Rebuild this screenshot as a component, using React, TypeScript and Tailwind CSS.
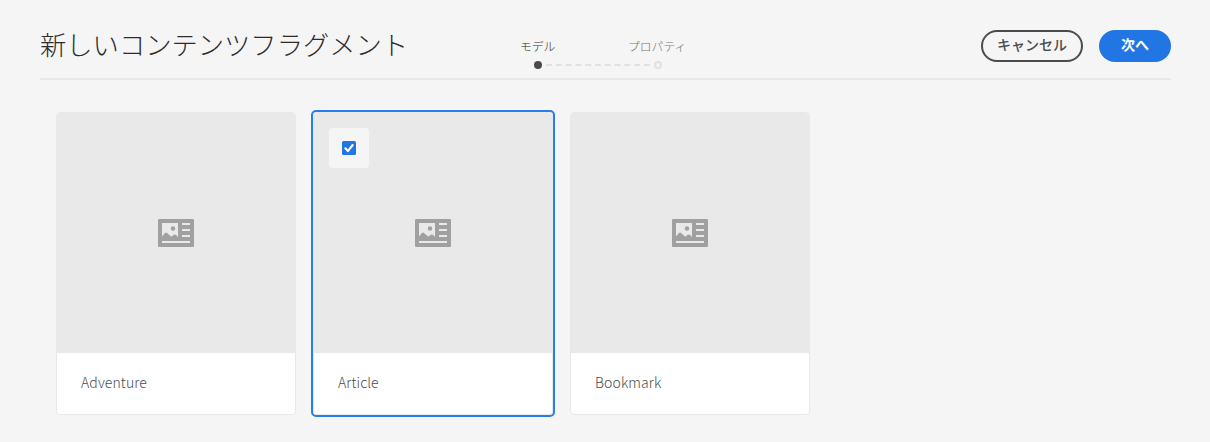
type Model = { name: string; selected?: boolean };

const models: Model[] = [
  { name: 'Adventure' },
  { name: 'Article', selected: true },
  { name: 'Bookmark' },
];

function FragmentIcon() {
  return (
    <svg width="36" height="28" viewBox="0 0 36 28" aria-hidden="true">
      <rect width="36" height="28" rx="1" fill="#a0a0a0" />
      <path
        d="M4 4H20V18L18.4 16.2Q16.7 14.6 15 16.2L13.4 17.8L9 13.9Q8 13 7 13.9L4 17.5Z"
        fill="#e9e9e9"
      />
      <circle cx="15" cy="9.5" r="2.2" fill="#a0a0a0" />
      <path d="M24 5H32M24 11H32M24 17H32M4 23H32" stroke="#e9e9e9" strokeWidth="2" />
    </svg>
  );
}

function SelectedMark() {
  return (
    <span className="absolute top-[15px] left-[15px] flex size-10 items-center justify-center rounded-[4px] bg-[#f5f5f5]">
      <svg width="14" height="14" viewBox="0 0 14 14" aria-hidden="true">
        <rect width="14" height="14" rx="1.5" fill="#2176e3" />
        <path d="M3.4 7.3L5.9 10.1L10.7 4" fill="none" stroke="#fff" strokeWidth="2.1" strokeLinecap="round" strokeLinejoin="round" />
      </svg>
    </span>
  );
}

function ModelCard({ name, selected }: Model) {
  return (
    <article
      className={
        selected
          ? 'relative h-[303px] w-60 rounded-[3px] border border-[#e8e8e8] bg-white outline-2 outline-[#2680eb]'
          : 'relative h-[303px] w-60 rounded-[4px] border border-[#e8e8e8] bg-white'
      }
    >
      <div className="flex h-60 items-center justify-center rounded-t-[3px] bg-[#e9e9e9]">
        <FragmentIcon />
      </div>
      {selected && <SelectedMark />}
      <p className="flex h-[58px] items-center pl-6 text-[14px] leading-5 font-light tracking-[0.1px] text-[#4b4b4b]">
        {name}
      </p>
    </article>
  );
}

export default function App() {
  return (
    <main className="h-[442px] w-[1210px] overflow-hidden bg-[#f5f5f5] px-10 font-['Noto_Sans_CJK_JP',sans-serif]">
      <header className="flex h-20 w-[1131px] items-start border-b-2 border-[#e8e8e8]">
        <h1 className="mt-[24px] w-[480px] text-[26.3px] leading-10 font-light whitespace-nowrap text-[#2c2c2c]">
          新しいコンテンツフラグメント
        </h1>
        <div className="mt-[37px] w-[170px]">
          <div className="flex text-[11.8px] leading-[18px] font-light whitespace-nowrap">
            <span className="w-[108px] text-[#2c2c2c]">モデル</span>
            <span className="text-[#747474]">プロパティ</span>
          </div>
          <div className="mt-[6px] ml-[14px] flex items-center gap-1">
            <span className="size-2 rounded-full bg-[#4b4b4b]" />
            <span className="w-[104px] border-t-2 border-dashed border-[#e1e1e1]" />
            <span className="size-2 rounded-full border-2 border-[#e1e1e1]" />
          </div>
        </div>
        <div className="mt-[30px] ml-auto flex gap-4 text-[14px] font-bold">
          <button className="h-8 w-[102px] rounded-full border-2 border-[#4b4b4b] pb-[3px] leading-[25px] font-medium text-[#4b4b4b]">キャンセル</button>
          <button className="h-8 w-[72px] rounded-full bg-[#2176e3] pb-[3px] leading-[29px] text-white">次へ</button>
        </div>
      </header>
      <section className="flex gap-[17px] pt-8 pl-4">
        {models.map((model) => (
          <ModelCard key={model.name} {...model} />
        ))}
      </section>
    </main>
  );
}
